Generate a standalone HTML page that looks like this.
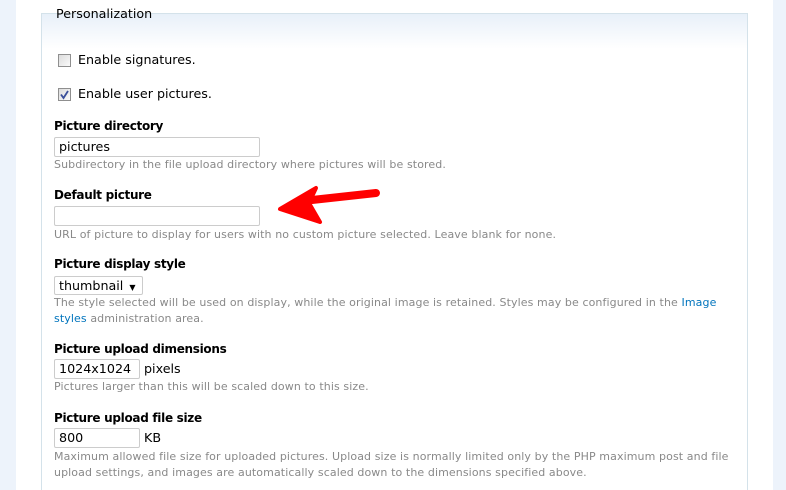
<!DOCTYPE html>
<html><head><meta charset="utf-8"><style>
*{margin:0;padding:0;box-sizing:border-box}
html,body{width:786px;height:490px;overflow:hidden}
body{background:#fff;font-family:Verdana,"DejaVu Sans",sans-serif;color:#000;position:relative}
.l{position:absolute;left:0;top:0;width:16px;height:490px;background:#edf3fb}
.r{position:absolute;left:773px;top:0;width:13px;height:490px;background:#edf3fb}
.fs{position:absolute;left:41px;top:13px;width:707px;height:477px;border:1px solid #d4e2ea;border-bottom:none;background:linear-gradient(#e8f0f9,#fff 35px)}
.t{position:absolute;white-space:nowrap;line-height:14px}
.n{font-size:12.7px}
.b{font-size:12px;font-weight:bold;letter-spacing:-0.3px}
.d{font-size:11px;color:#898989;letter-spacing:0.1px}
.d a{color:#0074bd;text-decoration:none}
.in{position:absolute;border:1px solid #ccc;background:#fff;font-size:12.7px;padding-left:4px;line-height:18px;border-radius:2px}
.cb{position:absolute;width:13px;height:13px;border:1px solid #8f8f8f;background:linear-gradient(135deg,#dcdcdc,#fafafa)}
</style></head><body>
<div class="l"></div><div class="r"></div>
<div class="fs"></div>
<div class="t n" style="left:52px;top:7px;padding:0 4px">Personalization</div>
<div class="cb" style="left:58px;top:54px"></div>
<div class="t n" style="left:78px;top:53px">Enable signatures.</div>
<div class="cb" style="left:58px;top:88px"></div>
<svg style="position:absolute;left:58px;top:88px" width="13" height="13"><path d="M3 6.5 L5.5 10 L10 3" stroke="#3a4f9a" stroke-width="1.8" fill="none"/></svg>
<div class="t n" style="left:78px;top:87px">Enable user pictures.</div>

<div class="t b" style="left:54px;top:119px">Picture directory</div>
<div class="in" style="left:54px;top:137px;width:206px;height:20px">pictures</div>
<div class="t d" style="left:54px;top:158px">Subdirectory in the file upload directory where pictures will be stored.</div>

<div class="t b" style="left:54px;top:188px">Default picture</div>
<div class="in" style="left:54px;top:206px;width:206px;height:20px"></div>
<div class="t d" style="left:54px;top:228px">URL of picture to display for users with no custom picture selected. Leave blank for none.</div>

<div class="t b" style="left:54px;top:257px">Picture display style</div>
<div class="in" style="left:54px;top:276px;width:89px;height:19px;line-height:17px">thumbnail <span style="font-size:8px;margin-left:2px">▼</span></div>
<div class="t d" style="left:54px;top:296px">The style selected will be used on display, while the original image is retained. Styles may be configured in the <a>Image</a></div>
<div class="t d" style="left:54px;top:312px"><a>styles</a> administration area.</div>

<div class="t b" style="left:54px;top:342px">Picture upload dimensions</div>
<div class="in" style="left:54px;top:359px;width:86px;height:20px">1024x1024</div>
<div class="t n" style="left:144px;top:362px">pixels</div>
<div class="t d" style="left:54px;top:380px">Pictures larger than this will be scaled down to this size.</div>

<div class="t b" style="left:54px;top:411px">Picture upload file size</div>
<div class="in" style="left:54px;top:428px;width:86px;height:20px">800</div>
<div class="t n" style="left:144px;top:431px">KB</div>
<div class="t d" style="left:54px;top:450px">Maximum allowed file size for uploaded pictures. Upload size is normally limited only by the PHP maximum post and file</div>
<div class="t d" style="left:54px;top:466px">upload settings, and images are automatically scaled down to the dimensions specified above.</div>

<svg style="position:absolute;left:0;top:0" width="786" height="490">
<path d="M312 200 L376 193" stroke="#f00" stroke-width="8" stroke-linecap="round"/>
<path d="M280 209 L316 188 L309 203 L320 222 Z" fill="#f00" stroke="#f00" stroke-width="4" stroke-linejoin="round"/>
</svg>
</body></html>
